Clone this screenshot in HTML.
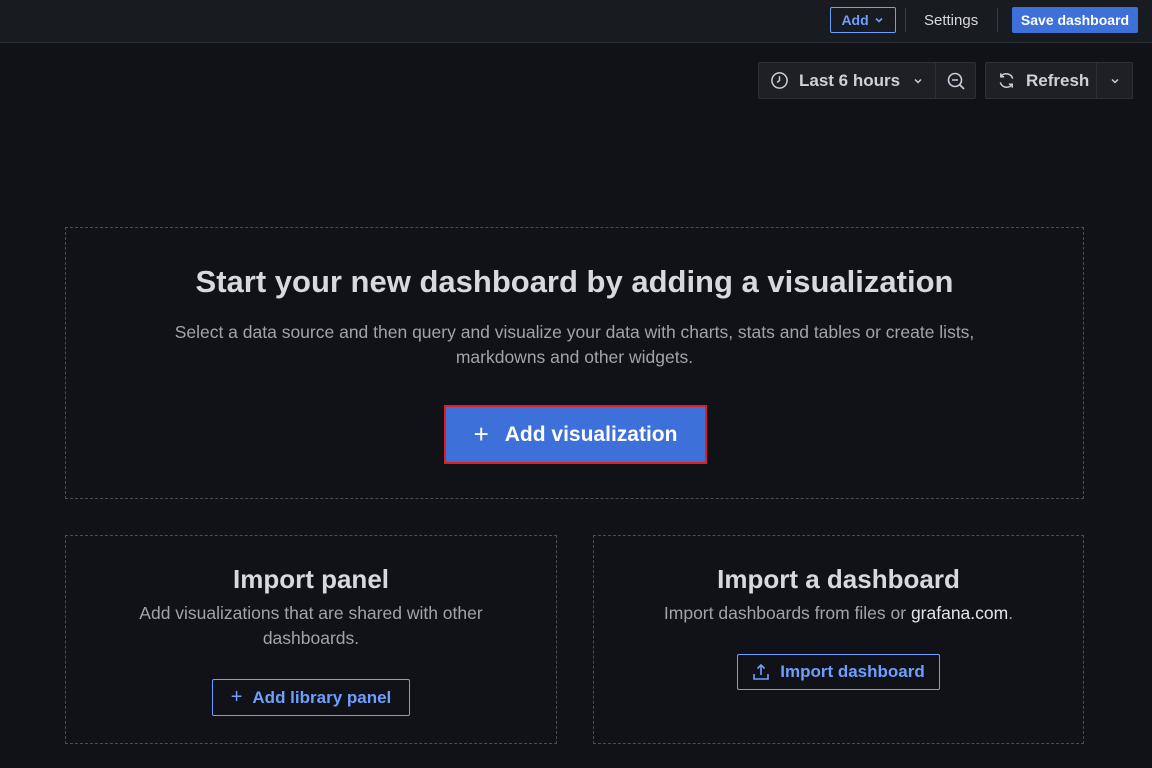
<!DOCTYPE html>
<html><head><style>
*{box-sizing:border-box;margin:0;padding:0}
body{width:1152px;height:768px;background:#111217;font-family:"Liberation Sans",sans-serif;color:#ccccdc;position:relative;overflow:hidden}
.abs{position:absolute}
.top{left:0;top:0;width:1152px;height:43px;background:#181b1f;border-bottom:1px solid #2a2d33}
.btn{display:flex;align-items:center;justify-content:center;position:absolute}
.box{position:absolute;border:1px dashed #4a4c53}
.c{text-align:center;position:absolute;left:0;right:0}
.muted{color:#a2a3ab}
.tb{background:#1e2026;border:1px solid #2d3036}
</style></head><body>
<div class="abs top"></div>
<div class="btn" style="left:830px;top:7px;width:66px;height:26px;border:1px solid #6e9fff;border-radius:2px;color:#6e9fff;font-size:14px;font-weight:bold">Add&nbsp;<svg width="12" height="12" viewBox="0 0 12 12"><path d="M3 4.5l3 3 3-3" stroke="#6e9fff" stroke-width="1.6" fill="none"/></svg></div>
<div class="abs" style="left:905px;top:8px;width:1px;height:24px;background:#3a3d44"></div>
<div class="abs" style="left:924px;top:12px;font-size:15px;color:#d8d9e0">Settings</div>
<div class="abs" style="left:997px;top:8px;width:1px;height:24px;background:#3a3d44"></div>
<div class="btn" style="left:1012px;top:7px;width:126px;height:26px;background:#3d71d9;border-radius:2px;color:#fff;font-size:14px;font-weight:bold">Save dashboard</div>

<div class="btn tb" style="left:758px;top:62px;width:178px;height:37px;border-radius:2px 0 0 2px;justify-content:flex-start;padding-left:11px;font-size:17px;font-weight:bold;color:#d0d1d8">
<svg width="19" height="19" viewBox="0 0 20 20"><circle cx="10" cy="10" r="8" stroke="#ccccdc" stroke-width="1.6" fill="none"/><path d="M10 5.5V10l-2.5 2" stroke="#ccccdc" stroke-width="1.6" fill="none"/></svg>
<span style="margin-left:10px">Last 6 hours</span>
<svg style="margin-left:12px" width="12" height="12" viewBox="0 0 12 12"><path d="M3 4.5l3 3 3-3" stroke="#ccccdc" stroke-width="1.5" fill="none"/></svg></div>
<div class="btn tb" style="left:935px;top:62px;width:41px;height:37px;border-radius:0 2px 2px 0">
<svg width="20" height="20" viewBox="0 0 20 20"><circle cx="9" cy="9" r="6.5" stroke="#ccccdc" stroke-width="1.6" fill="none"/><path d="M6 9h6M14 14l4 4" stroke="#ccccdc" stroke-width="1.6"/></svg></div>
<div class="btn tb" style="left:985px;top:62px;width:112px;height:37px;border-radius:2px 0 0 2px;justify-content:flex-start;padding-left:11px;font-size:17px;font-weight:bold;color:#d0d1d8">
<svg width="19" height="19" viewBox="0 0 20 20"><path d="M16.5 8A7 7 0 0 0 4 6M3.5 12A7 7 0 0 0 16 14" stroke="#ccccdc" stroke-width="1.6" fill="none"/><path d="M4 2.5V6h3.5M16 17.5V14h-3.5" stroke="#ccccdc" stroke-width="1.6" fill="none"/></svg>
<span style="margin-left:10px">Refresh</span></div>
<div class="btn tb" style="left:1096px;top:62px;width:37px;height:37px;border-radius:0 2px 2px 0">
<svg width="12" height="12" viewBox="0 0 12 12"><path d="M3 4.5l3 3 3-3" stroke="#ccccdc" stroke-width="1.5" fill="none"/></svg></div>

<div class="box" style="left:65px;top:227px;width:1019px;height:272px">
<div class="c" style="top:36px;font-size:31px;font-weight:bold;color:#d8d9e0">Start your new dashboard by adding a visualization</div>
<div class="c muted" style="top:92px;font-size:17.5px;line-height:25px">Select a data source and then query and visualize your data with charts, stats and tables or create lists,<br>markdowns and other widgets.</div>
<div class="btn" style="left:378px;top:177px;width:263px;height:59px;background:#3d71d9;border:2px solid #e02020;color:#fff;font-size:21px;font-weight:bold"><span style="font-weight:normal;font-size:26px;margin-right:16px">+</span>Add visualization</div>
</div>

<div class="box" style="left:65px;top:535px;width:492px;height:209px">
<div class="c" style="top:28px;font-size:26px;font-weight:bold;color:#d8d9e0">Import panel</div>
<div class="c muted" style="top:65px;font-size:17.5px;line-height:25px">Add visualizations that are shared with other<br>dashboards.</div>
<div class="btn" style="left:146px;top:143px;width:198px;height:37px;border:1px solid #6e9fff;border-radius:2px;color:#6e9fff;font-size:17px;font-weight:bold"><span style="font-weight:normal;font-size:20px;margin-right:10px">+</span>Add library panel</div>
</div>

<div class="box" style="left:593px;top:535px;width:491px;height:209px">
<div class="c" style="top:28px;font-size:26px;font-weight:bold;color:#d8d9e0">Import a dashboard</div>
<div class="c muted" style="top:65px;font-size:17.5px;line-height:25px">Import dashboards from files or <span style="color:#e4e5ea">grafana.com</span>.</div>
<div class="btn" style="left:143px;top:118px;width:203px;height:36px;border:1px solid #6e9fff;border-radius:2px;color:#6e9fff;font-size:17px;font-weight:bold">
<svg width="18" height="18" viewBox="0 0 18 18" style="margin-right:10px"><path d="M9 12V2M5.5 5.5L9 2l3.5 3.5M2 11v5h14v-5" stroke="#6e9fff" stroke-width="1.6" fill="none"/></svg>Import dashboard</div>
</div>
</body></html>
